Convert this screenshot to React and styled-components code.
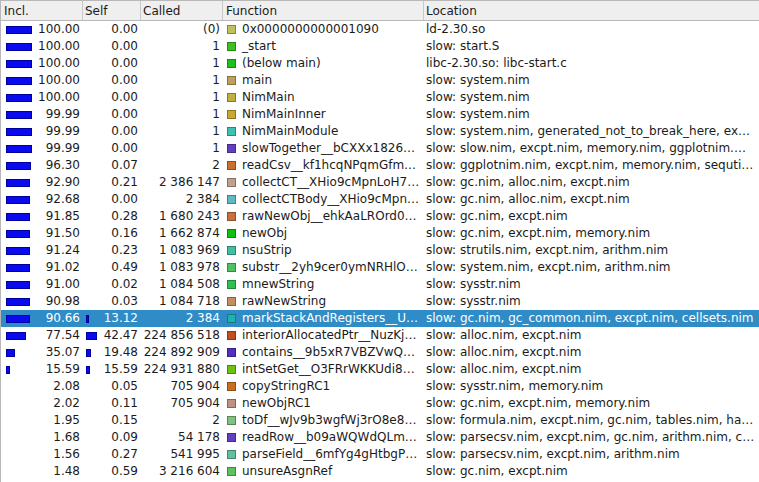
import React from 'react';
import styled, { createGlobalStyle } from 'styled-components';

const GlobalStyle = createGlobalStyle`
  html, body {
    margin: 0;
    padding: 0;
    background: #ffffff;
  }
`

const COLUMNS = '82px 58px 82px 201px 1fr';
const BAR_MAX = 26;

const rows = [
  { incl: '100.00', self: '0.00', called: '(0)', fn: '0x0000000000001090', color: '#c0c060', loc: 'ld-2.30.so' },
  { incl: '100.00', self: '0.00', called: '1', fn: '_start', color: '#40c020', loc: 'slow: start.S' },
  { incl: '100.00', self: '0.00', called: '1', fn: '(below main)', color: '#20c020', loc: 'libc-2.30.so: libc-start.c' },
  { incl: '100.00', self: '0.00', called: '1', fn: 'main', color: '#c0a060', loc: 'slow: system.nim' },
  { incl: '100.00', self: '0.00', called: '1', fn: 'NimMain', color: '#c0b040', loc: 'slow: system.nim' },
  { incl: '99.99', self: '0.00', called: '1', fn: 'NimMainInner', color: '#c8a830', loc: 'slow: system.nim' },
  { incl: '99.99', self: '0.00', called: '1', fn: 'NimMainModule', color: '#40c0b0', loc: 'slow: system.nim, generated_not_to_break_here, ex…' },
  { incl: '99.99', self: '0.00', called: '1', fn: 'slowTogether__bCXXx1826…', color: '#6040c0', loc: 'slow: slow.nim, excpt.nim, memory.nim, ggplotnim.…' },
  { incl: '96.30', self: '0.07', called: '2', fn: 'readCsv__kf1hcqNPqmGfm…', color: '#c87030', loc: 'slow: ggplotnim.nim, excpt.nim, memory.nim, sequti…' },
  { incl: '92.90', self: '0.21', called: '2 386 147', fn: 'collectCT__XHio9cMpnLoH7…', color: '#c0a090', loc: 'slow: gc.nim, alloc.nim, excpt.nim' },
  { incl: '92.68', self: '0.00', called: '2 384', fn: 'collectCTBody__XHio9cMpn…', color: '#60b8c0', loc: 'slow: gc.nim, alloc.nim, excpt.nim' },
  { incl: '91.85', self: '0.28', called: '1 680 243', fn: 'rawNewObj__ehkAaLROrd0…', color: '#c87040', loc: 'slow: gc.nim, excpt.nim' },
  { incl: '91.50', self: '0.16', called: '1 662 874', fn: 'newObj', color: '#10c010', loc: 'slow: gc.nim, excpt.nim, memory.nim' },
  { incl: '91.24', self: '0.23', called: '1 083 969', fn: 'nsuStrip', color: '#40c0a0', loc: 'slow: strutils.nim, excpt.nim, arithm.nim' },
  { incl: '91.02', self: '0.49', called: '1 083 978', fn: 'substr__2yh9cer0ymNRHlO…', color: '#50c060', loc: 'slow: system.nim, excpt.nim, arithm.nim' },
  { incl: '91.00', self: '0.02', called: '1 084 508', fn: 'mnewString', color: '#30c050', loc: 'slow: sysstr.nim' },
  { incl: '90.98', self: '0.03', called: '1 084 718', fn: 'rawNewString', color: '#c09060', loc: 'slow: sysstr.nim' },
  { incl: '90.66', self: '13.12', called: '2 384', fn: 'markStackAndRegisters__U…', color: '#20b0b0', loc: 'slow: gc.nim, gc_common.nim, excpt.nim, cellsets.nim', selected: true },
  { incl: '77.54', self: '42.47', called: '224 856 518', fn: 'interiorAllocatedPtr__NuzKj…', color: '#c05020', loc: 'slow: alloc.nim, excpt.nim' },
  { incl: '35.07', self: '19.48', called: '224 892 909', fn: 'contains__9b5xR7VBZVwQ…', color: '#5030c0', loc: 'slow: alloc.nim, excpt.nim' },
  { incl: '15.59', self: '15.59', called: '224 931 880', fn: 'intSetGet__O3FRrWKKUdi8…', color: '#70c010', loc: 'slow: alloc.nim, excpt.nim' },
  { incl: '2.08', self: '0.05', called: '705 904', fn: 'copyStringRC1', color: '#c87020', loc: 'slow: sysstr.nim, memory.nim' },
  { incl: '2.02', self: '0.11', called: '705 904', fn: 'newObjRC1', color: '#c09080', loc: 'slow: gc.nim, excpt.nim, memory.nim' },
  { incl: '1.95', self: '0.15', called: '2', fn: 'toDf__wJv9b3wgfWj3rO8e8…', color: '#80c080', loc: 'slow: formula.nim, excpt.nim, gc.nim, tables.nim, ha…' },
  { incl: '1.68', self: '0.09', called: '54 178', fn: 'readRow__b09aWQWdQLm…', color: '#6040c0', loc: 'slow: parsecsv.nim, excpt.nim, gc.nim, arithm.nim, c…' },
  { incl: '1.56', self: '0.27', called: '541 995', fn: 'parseField__6mfYg4gHtbgP…', color: '#60c0a0', loc: 'slow: parsecsv.nim, excpt.nim, arithm.nim' },
  { incl: '1.48', self: '0.59', called: '3 216 604', fn: 'unsureAsgnRef', color: '#60c060', loc: 'slow: gc.nim, excpt.nim' },
  { incl: '1.47', self: '0.34', called: '1 084 243', fn: 'nimGCunrefNoCycle', color: '#c0a060', loc: 'slow: gc.nim, excpt.nim, arithm.nim' },
];

const Frame = styled.div`
    width: 759px;
    height: 482px;
    overflow: hidden;
    box-sizing: border-box;
    border-top: 1px solid #b8b8b8;
    border-left: 1px solid #b8b8b8;
    background: #ffffff;
    font-family: "DejaVu Sans", "Liberation Sans", sans-serif;
    font-size: 12px;
    color: #1b1b1b;
`

const HeaderRow = styled.div`
    display: grid;
    grid-template-columns: ${COLUMNS};
    height: 19px;
    background: #efefef;
    border-bottom: 1px solid #b8b8b8;
`

const HeaderCell = styled.div`
    display: flex;
    align-items: center;
    padding-left: ${({ pad }) => pad}px;
    border-right: 1px solid #c8c8c8;
    white-space: nowrap;
    overflow: hidden;
    &:last-child {
        border-right: none;
    }
`

const Row = styled.div`
    display: grid;
    grid-template-columns: ${COLUMNS};
    height: 17px;
    line-height: 17px;
    background: ${({ selected }) => (selected ? '#308cc6' : 'transparent')};
    color: ${({ selected }) => (selected ? '#ffffff' : 'inherit')};
`

const BarCell = styled.div`
    display: flex;
    align-items: center;
    padding: 0 3px 0 ${({ pad }) => pad}px;
    white-space: nowrap;
    overflow: hidden;
`

const Bar = styled.div`
    box-sizing: border-box;
    height: 8px;
    flex: none;
    background: #0a0af0;
    border: 1px solid #00009a;
`

const Value = styled.span`
    margin-left: auto;
`

const NumberCell = styled.div`
    padding-right: 3px;
    text-align: right;
    white-space: nowrap;
    overflow: hidden;
`

const FunctionCell = styled.div`
    display: flex;
    align-items: center;
    gap: 6px;
    padding-left: 4px;
    white-space: nowrap;
    overflow: hidden;
`

const Swatch = styled.span`
    box-sizing: border-box;
    flex: none;
    width: 9px;
    height: 9px;
    background: ${({ color }) => color};
    border: 1px solid rgba(0, 0, 0, 0.3);
`

const LocationCell = styled.div`
    padding-left: 2px;
    white-space: nowrap;
    overflow: hidden;
`

const barWidth = (pct) => Math.round((parseFloat(pct) / 100) * BAR_MAX);

const CostCell = ({ value, pad }) => {
    const w = barWidth(value);
    return (
        <BarCell pad={pad}>
            {w >= 2 && <Bar style={{ width: Math.max(w, 3) }} />}
            <Value>{value}</Value>
        </BarCell>
    );
};

const App = () => (
    <>
        <GlobalStyle />
        <Frame>
            <HeaderRow>
                <HeaderCell pad={3}>Incl.</HeaderCell>
                <HeaderCell pad={2}>Self</HeaderCell>
                <HeaderCell pad={2}>Called</HeaderCell>
                <HeaderCell pad={3}>Function</HeaderCell>
                <HeaderCell pad={2}>Location</HeaderCell>
            </HeaderRow>
            {rows.map((r, i) => (
                <Row key={i} selected={r.selected}>
                    <CostCell value={r.incl} pad={5} />
                    <CostCell value={r.self} pad={3} />
                    <NumberCell>{r.called}</NumberCell>
                    <FunctionCell>
                        <Swatch color={r.color} />
                        {r.fn}
                    </FunctionCell>
                    <LocationCell>{r.loc}</LocationCell>
                </Row>
            ))}
        </Frame>
    </>
);

export default App;
